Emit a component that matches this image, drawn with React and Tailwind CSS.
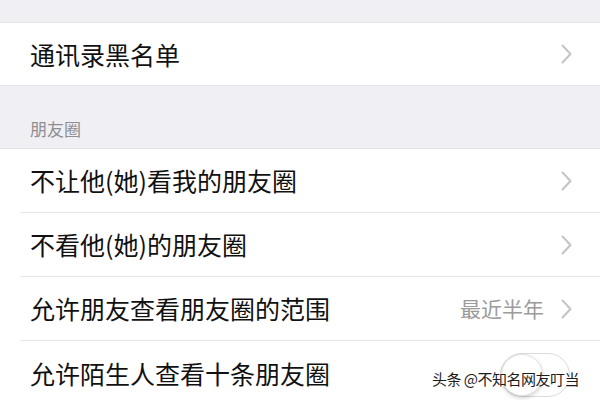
export default function App() {
  const Chevron = () => (
    <svg width="11" height="20" viewBox="0 0 11 20" className="shrink-0">
      <path d="M1.5 1.5 L9.5 10 L1.5 18.5" fill="none" stroke="#c4c4c8" strokeWidth="2" strokeLinecap="round" strokeLinejoin="round" />
    </svg>
  );

  const Row = ({ label, value, last, children }) => (
    <div className="h-[64px] bg-white pl-[20px]">
      <div className={`h-full flex items-center pl-[10px] pr-[28px] ${last ? "" : "border-b border-[#e6e6e8]"}`}>
        <span className="flex-1 text-[25px] text-[#111] leading-none">{label}</span>
        {value && <span className="text-[21px] text-[#9b9b9b] mr-[17px] leading-none">{value}</span>}
        {children || <Chevron />}
      </div>
    </div>
  );

  return (
    <div className="w-[600px] h-[400px] overflow-hidden relative bg-[#efeff4] font-['Noto_Sans_CJK_SC','Noto_Sans',sans-serif]">
      <div className="h-[23px] border-b border-[#e3e3e6]" />
      <div className="h-[63px] bg-white flex items-center pl-[30px] pr-[28px] border-b border-[#e3e3e6]">
        <span className="flex-1 text-[25px] text-[#111] leading-none">通讯录黑名单</span>
        <Chevron />
      </div>
      <div className="h-[62px] flex items-end pl-[30px] pb-[9px] text-[17px] text-[#8e8e93] leading-none">
        <span className="mb-[2px]">朋友圈</span>
      </div>
      <div className="border-t border-[#e3e3e6]">
        <Row label="不让他(她)看我的朋友圈" />
        <Row label="不看他(她)的朋友圈" />
        <Row label="允许朋友查看朋友圈的范围" value="最近半年" />
        <Row label="允许陌生人查看十条朋友圈" last>
          <div className="w-[70px] h-[44px] mr-[2px] mt-[4px] rounded-full border border-[#dcdcdc] bg-white relative">
            <div className="absolute left-0 top-0 w-[42px] h-[42px] rounded-full bg-white border border-[#e2e2e2] shadow-[0_2px_4px_rgba(0,0,0,0.18)]" />
          </div>
        </Row>
      </div>
      <div className="absolute left-[432px] top-[371px] text-[15px] leading-none text-[#1d1d1d] tracking-[-0.5px] [text-shadow:0_0_2px_#fff,0_0_2px_#fff]">
        头条 @不知名网友叮当
      </div>
    </div>
  );
}
